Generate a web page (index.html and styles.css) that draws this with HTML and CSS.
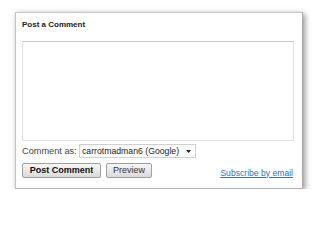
FILE: index.html
```html
<!DOCTYPE html>
<html>
<head>
<meta charset="utf-8">
<link rel="stylesheet" href="styles.css">
</head>
<body>
<div class="card">
  <h3 class="title">Post a Comment</h3>
  <div class="textarea"></div>
  <div class="as-row">
    <span class="label">Comment as:</span>
    <div class="select">
      <span class="sel-text">carrotmadman6 (Google)</span>
      <svg class="arrow" width="5" height="3" viewBox="0 0 5 3"><path d="M0 0H5L2.5 3Z" fill="#222"/></svg>
    </div>
  </div>
  <div class="btn-row">
    <button class="btn primary">Post Comment</button>
    <button class="btn">Preview</button>
    <a class="sub" href="#">Subscribe by email</a>
  </div>
</div>
</body>
</html>
```
FILE: styles.css
```css
html, body { margin: 0; padding: 0; background: #fff; }
body { padding: 12px 0 0 15px; font-family: "Liberation Sans", Arial, sans-serif; }
.card {
  box-sizing: border-box;
  width: 288px;
  height: 177px;
  border: 1px solid #c4c4c4;
  border-right-color: #a8a8a8;
  border-bottom-color: #b0b0b0;
  background: #fff;
  box-shadow: 2px 2px 6px rgba(0,0,0,0.42);
  padding: 7px 0 0 6px;
}
.title {
  margin: 0;
  font-size: 8px;
  line-height: 10px;
  font-weight: bold;
  color: #222;
}
.textarea {
  box-sizing: border-box;
  margin-top: 11px;
  width: 272px;
  height: 100px;
  border: 1px solid #e0e0e0;
  border-top-color: #c8c8c8;
  background: #fff;
}
.as-row {
  display: flex;
  align-items: center;
  margin-top: 3px;
  height: 14px;
}
.label {
  font-size: 9.2px;
  color: #444;
  width: 57px;
}
.select {
  box-sizing: border-box;
  display: flex;
  align-items: center;
  height: 14px;
  width: 117px;
  border: 1px solid #d0d0d0;
  padding: 0 0 0 2px;
}
.sel-text { font-size: 8.7px; color: #222; flex: 1; white-space: nowrap; }
.arrow { margin-right: 4px; }
.btn-row {
  display: flex;
  align-items: center;
  margin-top: 5px;
  width: 271px;
}
.btn {
  box-sizing: border-box;
  height: 15px;
  padding: 0;
  border: 1px solid #a0a0a0;
  border-radius: 2px;
  background: linear-gradient(#f6f6f6, #dadada);
  font-family: "Liberation Sans", Arial, sans-serif;
  font-size: 9px;
  line-height: 13px;
  color: #333;
}
.btn.primary { width: 79px; font-weight: bold; color: #111; margin-right: 5px; }
.btn:not(.primary) { width: 46px; }
.sub {
  margin-left: auto;
  margin-top: 4px;
  font-size: 8.6px;
  color: #3b6ea5;
  text-decoration: underline;
}
```
